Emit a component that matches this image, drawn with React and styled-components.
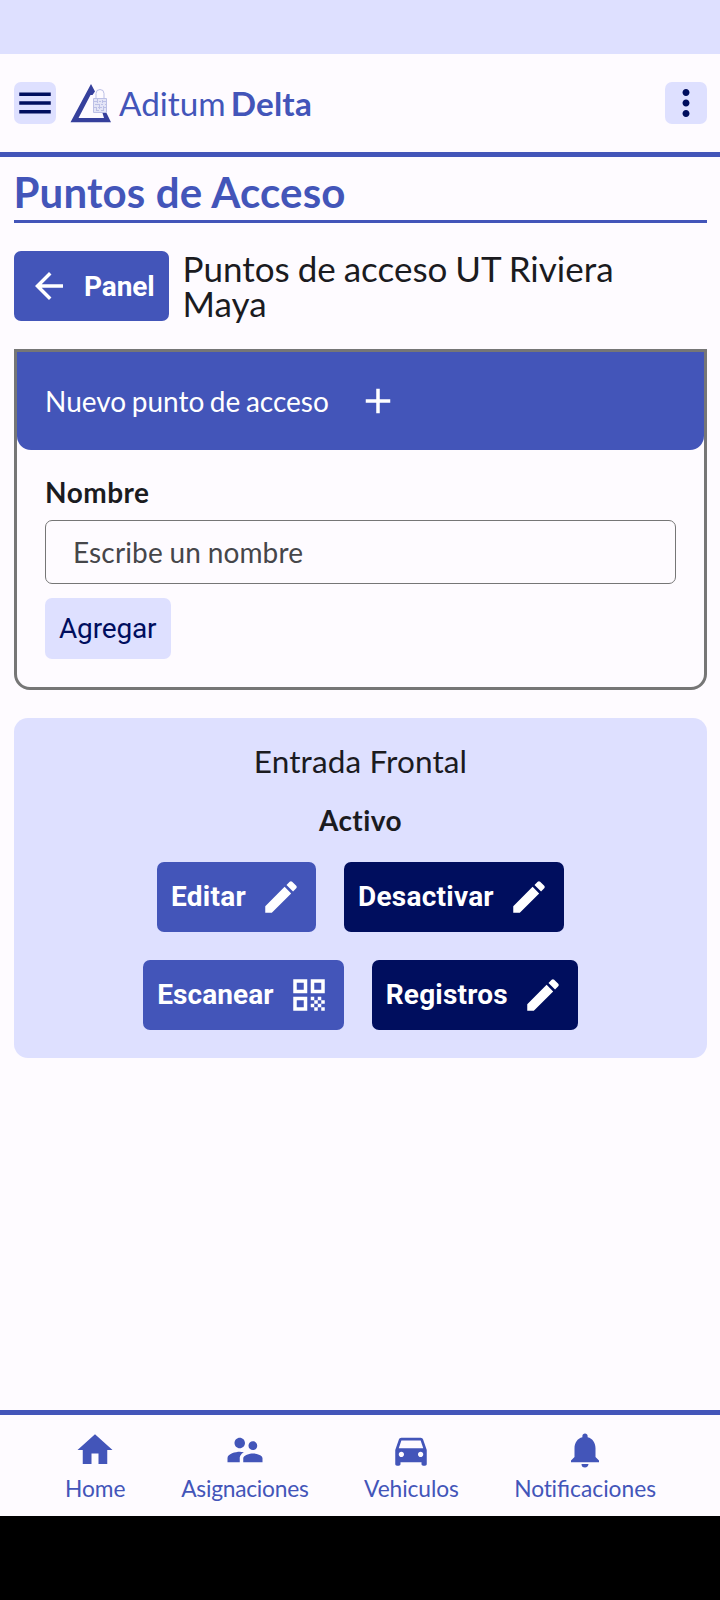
import React from "react";
import styled, { createGlobalStyle } from "styled-components";
import {
  MdMenu, MdMoreVert, MdArrowBack, MdAdd, MdEdit, MdQrCode,
  MdHome, MdSupervisorAccount, MdDirectionsCar, MdNotifications,
} from "react-icons/md";

const c = {
  primary: "#4355b9",
  container: "#dee0ff",
  navy: "#000e5e",
  bg: "#fefbff",
  ink: "#1b1b1f",
  outline: "#767676",
};

const Global = createGlobalStyle`
  * { box-sizing: border-box; }
  body { margin: 0; background: #000; }
  h1, h2, h3, p { margin: 0; font-weight: 400; }
  button { border: 0; margin: 0; padding: 0; font: inherit; }
  svg { display: block; flex: none; }
`;

const Screen = styled.div`
  width: 720px;
  height: 1600px;
  display: flex;
  flex-direction: column;
  font-family: Lato, "Liberation Sans", sans-serif;
  color: ${c.ink};
  background: ${c.bg};
`;
const StatusBar = styled.div`
  height: 54px;
  flex: none;
  background: ${c.container};
`;
const Header = styled.header`
  height: 103px;
  flex: none;
  display: flex;
  align-items: center;
  padding: 0 13px 0 14px;
  border-bottom: 5px solid ${c.primary};
`;
const IconButton = styled.button`
  width: 42px;
  height: 42px;
  border-radius: 7px;
  background: ${c.container};
  color: ${c.navy};
`;
const Logo = styled.svg`
  margin-left: 14px;
`;
const Brand = styled.div`
  flex: 1;
  margin-left: 7px;
  font-size: 33.25px;
  line-height: 42px;
  word-spacing: -3.4px;
  color: ${c.primary};
  b { letter-spacing: 0.2px; }
`;
const Main = styled.main`
  flex: 1;
  padding: 14px 13px 0 14px;
`;
const Title = styled.h1`
  height: 52px;
  border-bottom: 3px solid ${c.primary};
  color: ${c.primary};
  font-size: 42px;
  line-height: 42px;
  font-weight: 700;
  letter-spacing: 0.15px;
  text-indent: -0.5px;
`;
const SubHeader = styled.div`
  display: flex;
  align-items: center;
  gap: 14px;
  margin-top: 28px;
  height: 70px;
`;
const Subtitle = styled.h2`
  flex: 1;
  padding-right: 28px;
  font-size: 35px;
  line-height: 35px;
  word-spacing: -1px;
`;
const ActionButton = styled.button`
  display: flex;
  align-items: center;
  gap: 14px;
  height: 70px;
  padding: 0 14px;
  border-radius: 7px;
  white-space: nowrap;
  background: ${(p) => (p.$dark ? c.navy : c.primary)};
  color: #fff;
  font-family: Roboto, sans-serif;
  font-weight: 700;
  font-size: 28px;
  letter-spacing: ${(p) => p.$spacing || 0}px;
`;
const ButtonText = styled.span`
  padding-bottom: 2px;
`;
const FormCard = styled.section`
  margin-top: 28px;
  height: 341px;
  border: 3px solid ${c.outline};
  border-radius: 0 0 16px 16px;
`;
const FormHeader = styled.div`
  height: 98px;
  display: flex;
  align-items: center;
  gap: 28px;
  padding: 0 28px;
  border-radius: 0 0 14px 14px;
  background: ${c.primary};
  color: #fff;
  font-size: 28px;
  word-spacing: -1.6px;
`;
const FormBody = styled.div`
  display: flex;
  flex-direction: column;
  align-items: flex-start;
  padding: 25px 28px 0;
`;
const Label = styled.label`
  font-size: 28px;
  line-height: 34px;
  font-weight: 700;
  letter-spacing: 0.5px;
`;
const Input = styled.input`
  width: 100%;
  height: 64px;
  margin: 11px 0 14px;
  padding: 0 27px;
  border: 1px solid ${c.outline};
  border-radius: 7px;
  background: transparent;
  font: 28px Lato, sans-serif;
  letter-spacing: 0.15px;
  word-spacing: -0.7px;
  &::placeholder { color: #46464a; opacity: 1; }
`;
const AddButton = styled.button`
  height: 61px;
  padding: 0 15px 0 14px;
  border-radius: 7px;
  background: ${c.container};
  color: ${c.navy};
  font-family: Roboto, sans-serif;
  font-size: 28px;
  letter-spacing: -0.15px;
`;
const AccessCard = styled.section`
  margin-top: 28px;
  height: 340px;
  padding-top: 24px;
  border-radius: 14px;
  background: ${c.container};
  text-align: center;
`;
const AccessName = styled.h3`
  font-size: 31.5px;
  line-height: 38px;
  letter-spacing: 0.12px;
`;
const AccessState = styled.p`
  margin: 23px 0 25px;
  font-size: 28px;
  line-height: 34px;
  font-weight: 700;
  font-variant-ligatures: none;
  letter-spacing: 0.45px;
`;
const ButtonRow = styled.div`
  display: flex;
  justify-content: center;
  gap: 28px;
  margin-bottom: 28px;
`;
const Nav = styled.nav`
  height: 106px;
  flex: none;
  display: flex;
  justify-content: center;
  gap: 55.6px;
  padding-left: 1px;
  border-top: 5px solid ${c.primary};
  color: ${c.primary};
`;
const NavItem = styled.div`
  display: flex;
  flex-direction: column;
  align-items: center;
  padding-top: 14px;
  font-size: 22.75px;
  line-height: 28px;
  letter-spacing: ${(p) => p.$spacing}px;
  svg { margin-bottom: 4px; }
`;
const Plain = styled.span`
  font-variant-ligatures: none;
  letter-spacing: -0.2px;
`;
const SystemBar = styled.div`
  height: 84px;
  flex: none;
  background: #000;
`;

const LockPattern = () => (
  <g fill="none" stroke="#bcc0e6" strokeWidth="1">
    <path d="M26 16v-4.500a4 4 0 0 1 8 0V16" />
    <path d="M23.500 16.500h13v14h-13z" fill="#e4e5f6" />
    <path d="M24 19.500h3M29 19.500h2M33 19.500h3M25 22.500h4M31 22.500h2M35 22.500h1M24 25.500h2M28 25.500h4M34 25.500h2M26 28.500h3M31 28.500h3M27.500 17v4M32.500 18v3M29.500 22v5M33.500 24v5M26.500 25v4" />
  </g>
);

const tabs = [
  ["Home", MdHome, 0],
  ["Asignaciones", MdSupervisorAccount, -0.25],
  ["Vehiculos", MdDirectionsCar, -0.1],
  [<span key="n"><Plain>Not</Plain>ificaciones</span>, MdNotifications, 0],
];

export default function App() {
  return (
    <Screen>
      <Global />
      <StatusBar />
      <Header>
        <IconButton aria-label="Menu"><MdMenu size={42} /></IconButton>
        <Logo width="42" height="42" viewBox="0 0 42 42">
          <path
            d="M21 2L0.500 40.200H41L36.500 31H32.500L34 36H8.500L20.500 13L22.500 13L25 9.500Z"
            fill="#36409c"
          />
          <LockPattern />
        </Logo>
        <Brand>Aditum <b>Delta</b></Brand>
        <IconButton aria-label="Opciones"><MdMoreVert size={42} /></IconButton>
      </Header>
      <Main>
        <Title>Puntos de Acceso</Title>
        <SubHeader>
          <ActionButton $spacing={-0.1}><MdArrowBack size={42} />Panel</ActionButton>
          <Subtitle>Puntos de acceso UT Riviera Maya</Subtitle>
        </SubHeader>
        <FormCard>
          <FormHeader>Nuevo punto de acceso<MdAdd size={42} /></FormHeader>
          <FormBody>
            <Label>Nombre</Label>
            <Input placeholder="Escribe un nombre" />
            <AddButton>Agregar</AddButton>
          </FormBody>
        </FormCard>
        <AccessCard>
          <AccessName>Entrada Frontal</AccessName>
          <AccessState>Activo</AccessState>
          <ButtonRow>
            <ActionButton $spacing={0.25}><ButtonText>Editar</ButtonText><MdEdit size={42} /></ActionButton>
            <ActionButton $dark $spacing={0.25}><ButtonText>Desactivar</ButtonText><MdEdit size={42} /></ActionButton>
          </ButtonRow>
          <ButtonRow>
            <ActionButton $spacing={0.1}><ButtonText>Escanear</ButtonText><MdQrCode size={42} /></ActionButton>
            <ActionButton $dark $spacing={0.2}><ButtonText>Registros</ButtonText><MdEdit size={42} /></ActionButton>
          </ButtonRow>
        </AccessCard>
      </Main>
      <Nav>
        {tabs.map(([label, Icon, spacing], i) => (
          <NavItem key={i} $spacing={spacing}><Icon size={42} />{label}</NavItem>
        ))}
      </Nav>
      <SystemBar />
    </Screen>
  );
}
